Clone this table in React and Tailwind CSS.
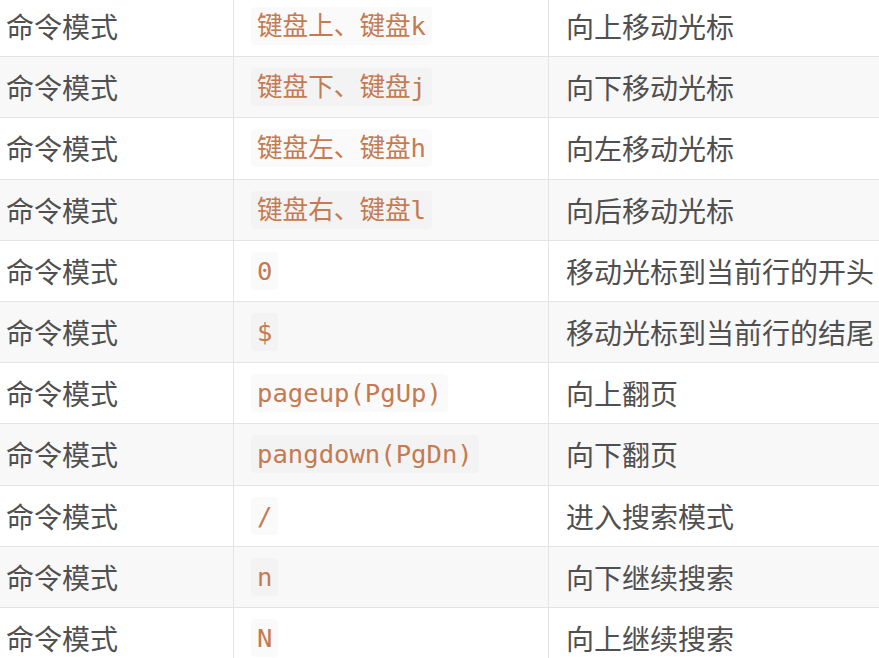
import React from "react";

const rows = [
  ["键盘上、键盘k", "向上移动光标"],
  ["键盘下、键盘j", "向下移动光标"],
  ["键盘左、键盘h", "向左移动光标"],
  ["键盘右、键盘l", "向后移动光标"],
  ["0", "移动光标到当前行的开头"],
  ["$", "移动光标到当前行的结尾"],
  ["pageup(PgUp)", "向上翻页"],
  ["pangdown(PgDn)", "向下翻页"],
  ["/", "进入搜索模式"],
  ["n", "向下继续搜索"],
  ["N", "向上继续搜索"],
];

const cjk = { fontFamily: '"Noto Sans CJK SC", "Noto Sans", sans-serif' };
const mono = { fontFamily: '"DejaVu Sans Mono", "Noto Sans CJK SC", monospace' };

export default function App() {
  return (
    <div className="w-[879px] h-[658px] overflow-hidden bg-white">
      <div className="-mt-[4px]">
        {rows.map(([code, desc], i) => (
          <div
            key={i}
            className={`grid grid-cols-[233px_315px_1fr] h-[61.2px] border-b border-[#e4e4e4] ${
              i % 2 === 1 ? "bg-[#f8f8f8]" : "bg-white"
            }`}
          >
            <div className="flex items-center pl-[6px] text-[28px] text-[#505050] whitespace-nowrap" style={cjk}>
              命令模式
            </div>
            <div className="flex items-center pl-[17px] border-l border-[#e4e4e4]">
              <span
                className="px-[6px] py-[2px] rounded-[4px] bg-black/[0.02] text-[25.6px] leading-[34px] text-[#c47b52] whitespace-nowrap"
                style={mono}
              >
                {code}
              </span>
            </div>
            <div className="flex items-center pl-[17px] border-l border-[#e4e4e4] text-[28px] text-[#505050] whitespace-nowrap overflow-hidden" style={cjk}>
              {desc}
            </div>
          </div>
        ))}
      </div>
    </div>
  );
}
